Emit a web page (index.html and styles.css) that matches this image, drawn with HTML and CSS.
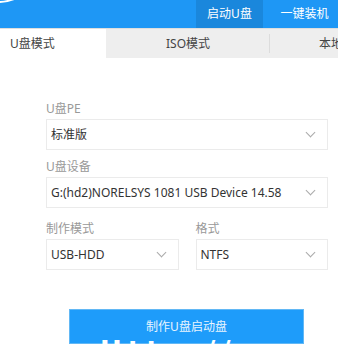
FILE: index.html
```html
<html>
	<head>
	<title>U盘启动</title>
	<link rel="stylesheet" href="styles.css">
	</head>
	<body>
<div id="header">
	<div class="logo"></div>
	<div class="nav">
		<span class="nav-item active">启动U盘</span>
		<span class="nav-item">一键装机</span>
	</div>
</div>

<div id="tabs">
	<span class="tab active">U盘模式</span>
	<span class="tab iso">ISO模式</span>
	<span class="tab local">本地</span>
</div>

<div id="main">
	<div class="field">
		<div class="label">U盘PE</div>
		<div class="select">标准版<i class="arrow"></i></div>
	</div>
	<div class="field">
		<div class="label">U盘设备</div>
		<div class="select">G:(hd2)NORELSYS 1081 USB Device 14.58<i class="arrow"></i></div>
	</div>
	<div class="row">
		<div class="field half">
			<div class="label">制作模式</div>
			<div class="select">USB-HDD<i class="arrow"></i></div>
		</div>
		<div class="field half">
			<div class="label">格式</div>
			<div class="select">NTFS<i class="arrow"></i></div>
		</div>
	</div>
	<div class="btn-wrap">
		<div class="btn">制作U盘启动盘</div>
	</div>
</div>

<div class="mark">Http://www.xtcz</div>
	</body>
</html>
```

FILE: styles.css
```css
body {
	margin: 0;
	width: 338px;
	height: 360px;
	overflow: hidden;
	position: relative;
	font-family: "Noto Sans", "Noto Sans CJK SC", sans-serif;
	font-size: 12px;
	color: #333;
	background: #fff;
}

#header {
	height: 28px;
	background: #1e97f5;
	display: flex;
	justify-content: flex-end;
	position: relative;
	overflow: hidden;
}
.logo {
	position: absolute;
	left: -46px;
	top: -85px;
	width: 84px;
	height: 84px;
	border: 2px solid #fff;
	border-radius: 50%;
}
.nav { display: flex; }
.nav-item {
	display: block;
	width: 67px;
	line-height: 28px;
	text-align: center;
	color: #fff;
	font-size: 12px;
}
.nav-item.active { background: #1a87dc; margin-right: 8px; }

#tabs {
	display: flex;
	height: 29px;
	background: #eeeeee;
	border-top: 1px solid #dedede;
	white-space: nowrap;
	overflow: hidden;
}
.tab {
	display: block;
	line-height: 29px;
	font-size: 12px;
	color: #444;
	flex: none;
}
.tab.active {
	width: 106px;
	background: #fff;
	padding-left: 10px;
	box-sizing: border-box;
}
.tab.iso {
	width: 164px;
	text-align: center;
	background: linear-gradient(#dcdcdc, #dcdcdc) right 5px / 1px 19px no-repeat;
}
.tab.local { padding-left: 49px; }

#main {
	padding: 42px 10px 0 46px;
}
.field { margin-bottom: 8px; }
.label {
	color: #999;
	font-size: 12px;
	line-height: 18px;
	margin-bottom: 1px;
}
.select {
	height: 29px;
	line-height: 29px;
	border: 1px solid #ebebeb;
	padding-left: 4px;
	position: relative;
	font-size: 12px;
	color: #333;
}
.arrow {
	position: absolute;
	right: 13px;
	top: 9px;
	width: 6px;
	height: 6px;
	border-right: 1px solid #aaa;
	border-bottom: 1px solid #aaa;
	transform: rotate(45deg);
}
.row {
	display: flex;
	gap: 17px;
	margin-top: 12px;
}
.half { flex: 1; }

.btn-wrap {
	padding: 31px 24px 0 23px;
}
.btn {
	height: 33px;
	line-height: 33px;
	background: #1e9cfa;
	border: 1px solid #62b8f5;
	color: #e8f4ff;
	text-align: center;
	font-size: 12px;
}

.mark {
	position: absolute;
	left: 100px;
	right: 30px;
	top: 336px;
	overflow: hidden;
	color: #fff;
	font-size: 26px;
	font-weight: bold;
	letter-spacing: 6px;
	white-space: nowrap;
	font-family: "DejaVu Sans", sans-serif;
}
```
